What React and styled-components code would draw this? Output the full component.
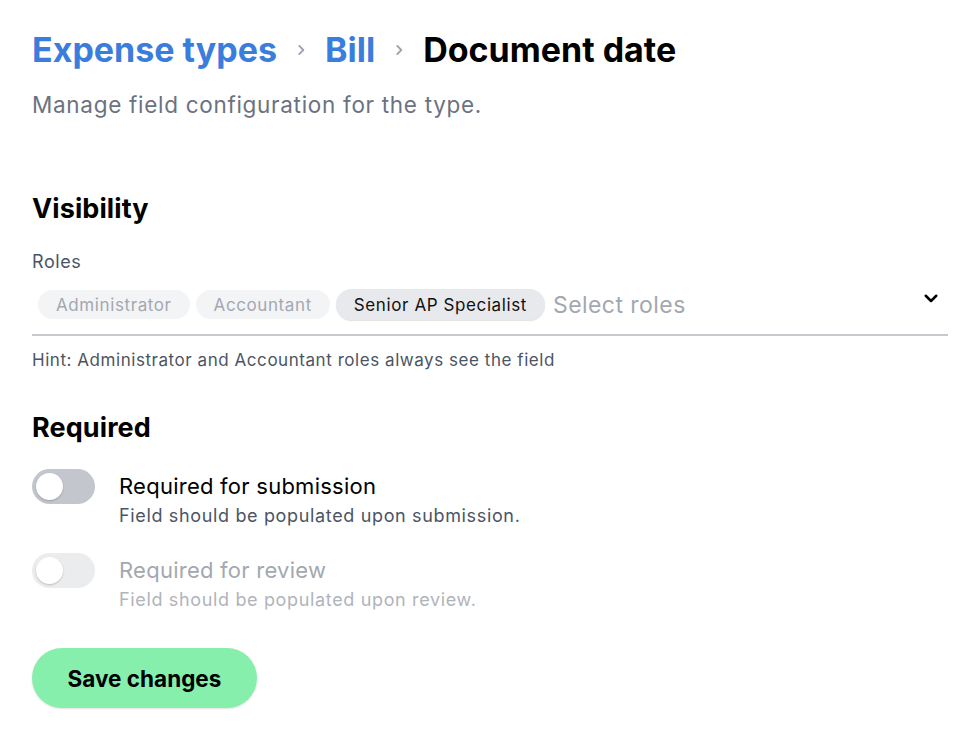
import React from "react";
import styled, { createGlobalStyle } from "styled-components";

const Global = createGlobalStyle`
  html, body { margin: 0; padding: 0; background: #ffffff; }
  body { font-family: Inter, "Noto Sans", sans-serif; color: #000; }
  * { box-sizing: border-box; }
`;

const Page = styled.div`
  padding: 28px 24px 20px 32px;
  display: flex;
  flex-direction: column;
`;

const Breadcrumb = styled.h1`
  margin: 0;
  display: flex;
  align-items: center;
  gap: 17px;
  font-size: 34px;
  line-height: 44px;
  font-weight: 700;
  letter-spacing: 0;
`;

const Crumb = styled.span`
  color: ${(p) => (p.$current ? "#000000" : "#3b7ddd")};
`;

const Sep = styled.span`
  display: inline-flex;
  color: #9ca3af;
`;

const Subtitle = styled.p`
  margin: 18px 0 0;
  font-size: 22.5px;
  line-height: 30px;
  letter-spacing: 0.7px;
  color: #6b7280;
`;

const SectionTitle = styled.h2`
  margin: ${(p) => p.$mt} 0 0;
  font-size: 27px;
  line-height: 34px;
  font-weight: 700;
  letter-spacing: 0.1px;
`;

const Label = styled.div`
  margin-top: 24px;
  font-size: 18px;
  line-height: 24px;
  letter-spacing: 0.6px;
  color: #4b5563;
`;

const SelectBox = styled.div`
  margin-top: 15px;
  display: flex;
  align-items: center;
  gap: 6px;
  padding: 0 8px 14px 6px;
  border-bottom: 2px solid #c6c9ce;
`;

const Pill = styled.span`
  display: inline-flex;
  align-items: center;
  height: ${(p) => (p.$active ? "31px" : "29px")};
  padding: 0 18px;
  border-radius: 999px;
  font-size: 17px;
  letter-spacing: 0.6px;
  background: ${(p) => (p.$active ? "#e8e9ec" : "#f3f4f6")};
  color: ${(p) => (p.$active ? "#111111" : "#a3a8b0")};
  box-shadow: ${(p) => (p.$active ? "0 1px 1px rgba(0,0,0,0.12)" : "none")};
`;

const Placeholder = styled.span`
  flex: 1;
  font-size: 23px;
  letter-spacing: 0.45px;
  color: #a3a8b0;
  margin-left: 2px;
`;

const Chevron = styled.span`
  display: inline-flex;
  margin-top: -14px;
`;

const Hint = styled.div`
  margin-top: 13px;
  font-size: 17px;
  line-height: 22px;
  letter-spacing: 0.55px;
  color: #4b5563;
`;

const ToggleRow = styled.div`
  margin-top: ${(p) => p.$mt};
  display: flex;
  align-items: flex-start;
  gap: 24px;
`;

const Track = styled.span`
  flex: none;
  width: 63px;
  height: 35px;
  border-radius: 999px;
  background: ${(p) => (p.$disabled ? "#ebecee" : "#c3c6cc")};
  display: flex;
  align-items: center;
  padding: 0 4px;
`;

const Knob = styled.span`
  width: 27px;
  height: 27px;
  border-radius: 50%;
  background: #ffffff;
  box-shadow: 0 1px 2px rgba(0, 0, 0, 0.2);
`;

const ToggleText = styled.div`
  display: flex;
  flex-direction: column;
  padding-top: 2px;
`;

const ToggleTitle = styled.div`
  font-size: 22px;
  line-height: 30px;
  letter-spacing: 0.25px;
  color: ${(p) => (p.$disabled ? "#a3a8b0" : "#000000")};
`;

const ToggleDesc = styled.div`
  margin-top: 1px;
  font-size: 18px;
  line-height: 28px;
  letter-spacing: 0.65px;
  color: ${(p) => (p.$disabled ? "#b0b4bb" : "#4b5563")};
`;

const Button = styled.button`
  margin-top: 34px;
  align-self: flex-start;
  width: 225px;
  height: 60px;
  border: none;
  border-radius: 999px;
  background: #86efac;
  color: #000;
  font-family: inherit;
  font-size: 22.5px;
  font-weight: 700;
  letter-spacing: 0;
  box-shadow: 0 1px 2px rgba(0, 0, 0, 0.12);
  cursor: pointer;
`;

const ChevronRight = () => (
  <svg width="14" height="14" viewBox="0 0 24 24" fill="none" stroke="currentColor" strokeWidth="3.2" strokeLinecap="round" strokeLinejoin="round">
    <path d="M9 5l7 7-7 7" />
  </svg>
);

const ChevronDown = () => (
  <svg width="18" height="18" viewBox="0 0 24 24" fill="none" stroke="#000" strokeWidth="3.4" strokeLinecap="round" strokeLinejoin="round">
    <path d="M5 9l7 7 7-7" />
  </svg>
);

export default function App() {
  return (
    <>
      <Global />
      <Page>
        <Breadcrumb>
          <Crumb>Expense types</Crumb>
          <Sep><ChevronRight /></Sep>
          <Crumb>Bill</Crumb>
          <Sep><ChevronRight /></Sep>
          <Crumb $current>Document date</Crumb>
        </Breadcrumb>
        <Subtitle>Manage field configuration for the type.</Subtitle>

        <SectionTitle $mt="72px">Visibility</SectionTitle>
        <Label>Roles</Label>
        <SelectBox>
          <Pill>Administrator</Pill>
          <Pill>Accountant</Pill>
          <Pill $active>Senior AP Specialist</Pill>
          <Placeholder>Select roles</Placeholder>
          <Chevron><ChevronDown /></Chevron>
        </SelectBox>
        <Hint>Hint: Administrator and Accountant roles always see the field</Hint>

        <SectionTitle $mt="40px">Required</SectionTitle>
        <ToggleRow $mt="24px">
          <Track><Knob /></Track>
          <ToggleText>
            <ToggleTitle>Required for submission</ToggleTitle>
            <ToggleDesc>Field should be populated upon submission.</ToggleDesc>
          </ToggleText>
        </ToggleRow>
        <ToggleRow $mt="23px">
          <Track $disabled><Knob /></Track>
          <ToggleText>
            <ToggleTitle $disabled>Required for review</ToggleTitle>
            <ToggleDesc $disabled>Field should be populated upon review.</ToggleDesc>
          </ToggleText>
        </ToggleRow>

        <Button>Save changes</Button>
      </Page>
    </>
  );
}
